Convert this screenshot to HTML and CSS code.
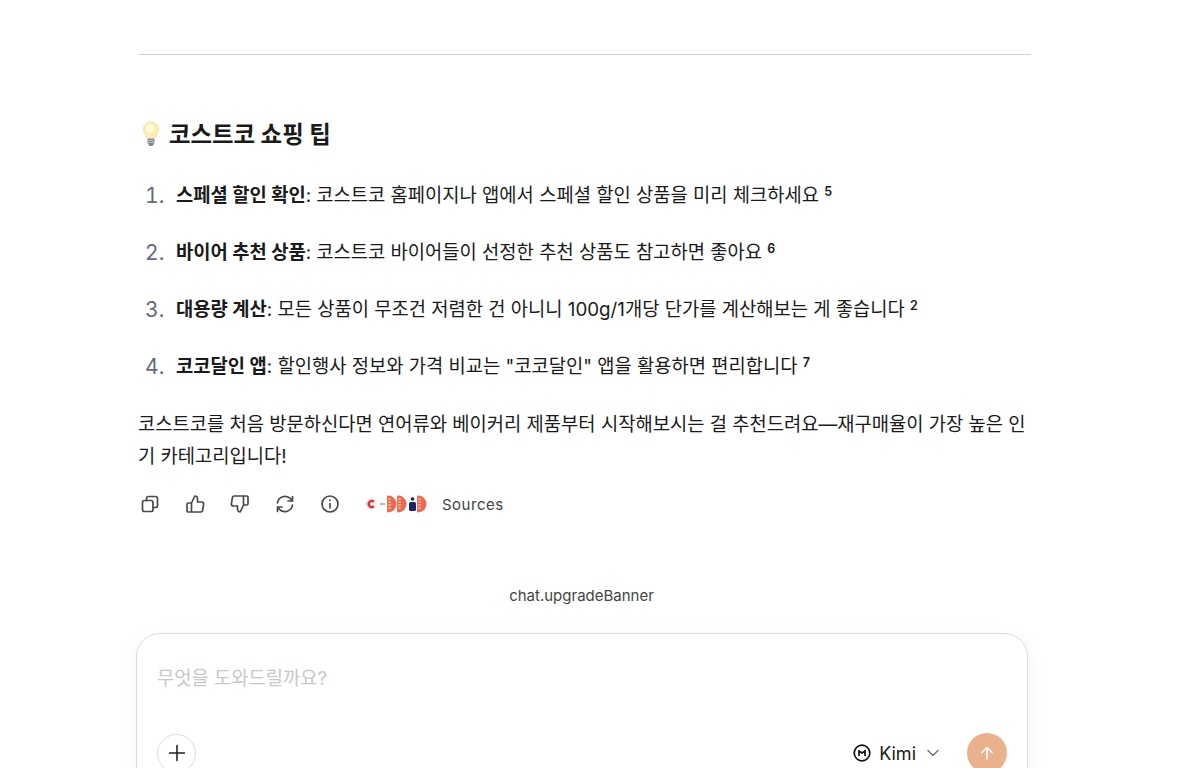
FILE: index.html
```html
<!DOCTYPE html>
<html lang="ko">
<head>
    <meta charset="UTF-8">
    <meta name="viewport" content="width=device-width, initial-scale=1.0">
    <title>코스트코 쇼핑 팁</title>
    <link rel="stylesheet" href="styles.css">
</head>
<body>
    <div class="page">
        <div class="answer">
            <hr class="divider">
            <h3 class="tip-title"><span class="bulb">
                <svg width="18" height="26" viewBox="0 0 18 26">
                    <path d="M9 1C4.600 1 1.500 4.300 1.500 8.300c0 3.400 2.300 5.200 3.300 8.700h8.400c1-3.500 3.300-5.300 3.300-8.700C16.500 4.300 13.400 1 9 1z" fill="#fbeeb4" stroke="#f5e6a6" stroke-width="1"/>
                    <ellipse cx="8" cy="7.500" rx="4" ry="4.500" fill="#fff9e0"/>
                    <path d="M5.500 17.500h7v4.500l-2 3h-3l-2-3z" fill="#85888d"/>
                    <path d="M5.500 19.500h7M5.500 21.500h7" stroke="#c9cbce" stroke-width="0.800"/>
                </svg>
            </span>코스트코 쇼핑 팁</h3>
            <ol class="tips">
                <li><strong>스페셜 할인 확인</strong>: 코스트코 홈페이지나 앱에서 스페셜 할인 상품을 미리 체크하세요 <sup>5</sup></li>
                <li><strong>바이어 추천 상품</strong>: 코스트코 바이어들이 선정한 추천 상품도 참고하면 좋아요 <sup>6</sup></li>
                <li><strong>대용량 계산</strong>: 모든 상품이 무조건 저렴한 건 아니니 100g/1개당 단가를 계산해보는 게 좋습니다 <sup>2</sup></li>
                <li><strong>코코달인 앱</strong>: 할인행사 정보와 가격 비교는 "코코달인" 앱을 활용하면 편리합니다 <sup>7</sup></li>
            </ol>
            <p class="closing">코스트코를 처음 방문하신다면 연어류와 베이커리 제품부터 시작해보시는 걸 추천드려요—재구매율이 가장 높은 인기 카테고리입니다!</p>
            <div class="actions">
                <button class="icon-btn" aria-label="copy">
                    <svg width="20" height="20" viewBox="0 0 20 20" fill="none" stroke="#4a4a4a" stroke-width="1.700" stroke-linejoin="round" stroke-linecap="round">
                        <rect x="2.500" y="6.500" width="10.500" height="11" rx="2"/>
                        <path d="M6.500 6.500V4.500a2 2 0 0 1 2-2h7a2 2 0 0 1 2 2v7a2 2 0 0 1-2 2H13"/>
                    </svg>
                </button>
                <button class="icon-btn" aria-label="like">
                    <svg width="20" height="20" viewBox="0 0 20 20" fill="none" stroke="#4a4a4a" stroke-width="1.700" stroke-linejoin="round" stroke-linecap="round">
                        <path d="M6.500 9v9H3.200a1.200 1.200 0 0 1-1.200-1.200v-6.600A1.200 1.200 0 0 1 3.200 9zM6.500 9l3.300-7c1.500 0 2.700 1.200 2.700 2.700V8h4.300a1.800 1.800 0 0 1 1.800 2.100l-1 6.300a1.900 1.900 0 0 1-1.900 1.600H6.500"/>
                    </svg>
                </button>
                <button class="icon-btn" aria-label="dislike">
                    <svg width="20" height="20" viewBox="0 0 20 20" fill="none" stroke="#4a4a4a" stroke-width="1.700" stroke-linejoin="round" stroke-linecap="round">
                        <path d="M13.500 11V2h3.300A1.200 1.200 0 0 1 18 3.200v6.600a1.200 1.200 0 0 1-1.200 1.200zM13.500 11l-3.300 7c-1.500 0-2.700-1.200-2.700-2.700V12H3.200a1.800 1.800 0 0 1-1.800-2.100l1-6.300A1.900 1.900 0 0 1 4.300 2h9.200"/>
                    </svg>
                </button>
                <button class="icon-btn" aria-label="retry">
                    <svg width="20" height="20" viewBox="0 0 20 20" fill="none" stroke="#4a4a4a" stroke-width="1.700" stroke-linejoin="round" stroke-linecap="round">
                        <path d="M2.500 9a7.600 7.600 0 0 1 13-4.300L17.500 7M17.500 2.500V7H13"/>
                        <path d="M17.500 11a7.600 7.600 0 0 1-13 4.300L2.500 13M2.500 17.500V13H7"/>
                    </svg>
                </button>
                <button class="icon-btn" aria-label="info">
                    <svg width="20" height="20" viewBox="0 0 20 20" fill="none" stroke="#4a4a4a" stroke-width="1.700" stroke-linecap="round">
                        <circle cx="10" cy="10" r="8"/>
                        <path d="M10 9.500v4.500"/>
                        <path d="M10 6.200v.2"/>
                    </svg>
                </button>
                <div class="sources">
                    <svg class="source-logos" width="66" height="18" viewBox="0 0 66 18">
                        <circle cx="7" cy="9" r="6" fill="#eeeeee"/>
                        <path d="M9.800 6.800A3 3 0 1 0 9.800 11.200" fill="none" stroke="#d8343c" stroke-width="2.400"/>
                        <rect x="15.500" y="8" width="5.500" height="2" fill="#e3b0ac"/>
                        <path d="M24 1.500a7.500 7.500 0 0 1 0 15z" fill="#ec6a50" stroke="#ec6a50" stroke-width="2" stroke-linejoin="round"/>
                        <path d="M34 1.500a7.500 7.500 0 0 1 0 15z" fill="#ec6a50" stroke="#ec6a50" stroke-width="2" stroke-linejoin="round"/>
                        <path d="M24 4h3M24 7h3M24 10h3M24 13h3M34 4h3M34 7h3M34 10h3M34 13h3" stroke="#f8cfc4" stroke-width="1"/>
                        <rect x="45" y="7" width="7" height="9" rx="1.500" fill="#1c2463"/>
                        <circle cx="48.500" cy="4" r="1.800" fill="#1c2463"/>
                        <path d="M54 1.500a7.500 7.500 0 0 1 0 15z" fill="#ec6a50" stroke="#ec6a50" stroke-width="2" stroke-linejoin="round"/>
                        <path d="M54 4h3M54 7h3M54 10h3M54 13h3" stroke="#f8cfc4" stroke-width="1"/>
                    </svg>
                    <span class="sources-label">Sources</span>
                </div>
            </div>
        </div>

        <div class="banner">chat.upgradeBanner</div>

        <div class="composer">
            <div class="placeholder">무엇을 도와드릴까요?</div>
            <div class="composer-bar">
                <button class="add-btn" aria-label="add">
                    <svg width="18" height="18" viewBox="0 0 18 18" stroke="#222222" stroke-width="1.600" stroke-linecap="round">
                        <path d="M9 1.500v15M1.500 9h15"/>
                    </svg>
                </button>
                <div class="composer-right">
                    <div class="model">
                        <svg width="18" height="18" viewBox="0 0 18 18" fill="none">
                            <circle cx="9" cy="9" r="7.800" stroke="#111111" stroke-width="1.700"/>
                            <path d="M6 6v6M12 6v6M6 7l3 2 3-2" stroke="#111111" stroke-width="1.700"/>
                        </svg>
                        <span>Kimi</span>
                        <svg class="chevron" width="14" height="14" viewBox="0 0 14 14" fill="none" stroke="#777777" stroke-width="1.500" stroke-linecap="round" stroke-linejoin="round">
                            <path d="M2 4.500l5 5 5-5"/>
                        </svg>
                    </div>
                    <button class="send-btn" aria-label="send">
                        <svg width="16" height="16" viewBox="0 0 16 16" fill="none" stroke="#ffffff" stroke-width="1.600" stroke-linecap="round" stroke-linejoin="round">
                            <path d="M8 14V2.500M3 7.500l5-5 5 5"/>
                        </svg>
                    </button>
                </div>
            </div>
        </div>
    </div>
</body>
</html>
```

FILE: styles.css
```css
html, body {
    height: 768px;
    overflow: hidden;
}
body {
    margin: 0;
    background-color: #ffffff;
    color: #1a1a1a;
    font-family: Inter, "Noto Sans CJK KR", sans-serif;
}
.page {
    width: 892px;
    margin-left: 138px;
}
.divider {
    border: none;
    border-top: 1px solid #d0d0d0;
    margin: 54px -1px 0 1px;
}
.tip-title {
    display: flex;
    align-items: center;
    height: 30px;
    margin: 63px 0 0;
    font-size: 23.4px;
    font-weight: 700;
}
.bulb {
    display: flex;
    margin: 2px 9px 0 4px;
}
.tips {
    margin: 0;
    padding: 0 0 0 38px;
    list-style: none;
    counter-reset: tip;
}
.tips li {
    position: relative;
    counter-increment: tip;
    height: 28px;
    line-height: 28px;
    margin-top: 29px;
    font-size: 18.75px;
    white-space: nowrap;
}
.tips li:first-child {
    margin-top: 34px;
}
.tips li::before {
    content: counter(tip) ".";
    position: absolute;
    left: -31px;
    color: #646a7c;
    font-size: 21px;
    font-feature-settings: "tnum";
}
.tips strong {
    font-weight: 700;
}
sup {
    font-size: 12.500px;
    font-weight: 600;
    line-height: 0;
    vertical-align: 6px;
}
.closing {
    margin: 28px 0 0;
    font-size: 18.75px;
    line-height: 32px;
}
.actions {
    display: flex;
    align-items: center;
    gap: 25px;
    margin-top: 17px;
    height: 28px;
    padding-left: 2px;
}
.icon-btn {
    display: flex;
    width: 20px;
    height: 20px;
    padding: 0;
    border: none;
    background: none;
    cursor: pointer;
}
.sources {
    display: flex;
    align-items: center;
    gap: 12px;
    margin-left: -1px;
}
.sources-label {
    color: #444444;
    font-size: 15px;
    letter-spacing: 0.5px;
}
.banner {
    margin-top: 68px;
    padding-right: 5px;
    color: #444444;
    font-size: 15px;
    line-height: 20px;
    text-align: center;
}
.composer {
    box-sizing: border-box;
    width: 892px;
    height: 175px;
    margin: 27px 0 0 -2px;
    padding: 30px 20px 0;
    border: 1px solid #dcdcdc;
    border-radius: 24px;
    background: #ffffff;
    box-shadow: 0 4px 20px rgba(0,0,0,0.05);
}
.placeholder {
    height: 30px;
    color: #c8c8c8;
    font-size: 18.75px;
    line-height: 30px;
}
.composer-bar {
    display: flex;
    justify-content: space-between;
    align-items: center;
    margin-top: 39px;
}
.add-btn {
    display: flex;
    align-items: center;
    justify-content: center;
    width: 39px;
    height: 39px;
    padding: 0;
    border: 1px solid #dcdcdc;
    border-radius: 50%;
    background: #ffffff;
}
.composer-right {
    display: flex;
    align-items: center;
    gap: 27px;
}
.model {
    display: flex;
    align-items: center;
    gap: 8px;
    font-size: 18px;
}
.chevron {
    margin-left: 2px;
}
.send-btn {
    display: flex;
    align-items: center;
    justify-content: center;
    width: 40px;
    height: 40px;
    padding: 0;
    border: none;
    border-radius: 50%;
    background-color: #e9b28c;
}
```
